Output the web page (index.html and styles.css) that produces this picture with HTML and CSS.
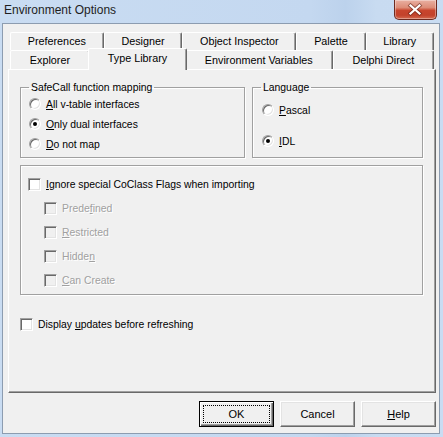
FILE: index.html
```html
<!DOCTYPE html>
<html>
<head>
<meta charset="utf-8">
<link rel="stylesheet" href="styles.css">
</head>
<body>
<div class="window">
  <div class="titlebar">
    <span class="title">Environment Options</span>
    <div class="close">
      <svg width="42" height="20" viewBox="0 0 42 20">
        <path d="M16.5 5.5 L25.5 13.5 M25.5 5.5 L16.5 13.5" stroke="#5a1a10" stroke-width="4" stroke-linecap="square" fill="none" opacity="0.55"/>
        <path d="M16.5 5.5 L25.5 13.5 M25.5 5.5 L16.5 13.5" stroke="#ffffff" stroke-width="2.2" stroke-linecap="square" fill="none"/>
      </svg>
    </div>
  </div>
  <div class="client">
    <div class="tabctl">
      <div class="tabrow row1">
        <div class="tab">Preferences</div>
        <div class="tab">Designer</div>
        <div class="tab">Object Inspector</div>
        <div class="tab">Palette</div>
        <div class="tab">Library</div>
      </div>
      <div class="tabrow row2">
        <div class="tab">Explorer</div>
        <div class="tab selected">Type Library</div>
        <div class="tab">Environment Variables</div>
        <div class="tab">Delphi Direct</div>
      </div>
      <div class="page">
        <div class="toprow">
          <fieldset class="group safecall">
            <legend>SafeCall function mapping</legend>
            <div class="opt"><span class="radio"></span><span><u>A</u>ll v-table interfaces</span></div>
            <div class="opt"><span class="radio on"></span><span><u>O</u>nly dual interfaces</span></div>
            <div class="opt"><span class="radio"></span><span><u>D</u>o not map</span></div>
          </fieldset>
          <fieldset class="group language">
            <legend>Language</legend>
            <div class="opt pascal"><span class="radio"></span><span><u>P</u>ascal</span></div>
            <div class="opt idl"><span class="radio on"></span><span><u>I</u>DL</span></div>
          </fieldset>
        </div>
        <div class="group flags">
          <div class="crow"><span class="check"></span><span><u>I</u>gnore special CoClass Flags when importing</span></div>
          <div class="crow sub disabled"><span class="check"></span><span>Prede<u>f</u>ined</span></div>
          <div class="crow sub disabled"><span class="check"></span><span><u>R</u>estricted</span></div>
          <div class="crow sub disabled"><span class="check"></span><span>Hidde<u>n</u></span></div>
          <div class="crow sub disabled"><span class="check"></span><span><u>C</u>an Create</span></div>
        </div>
        <div class="opt display"><span class="check"></span><span>Display <u>u</u>pdates before refreshing</span></div>
      </div>
    </div>
    <div class="buttons">
      <div class="btn default"><span class="focus">OK</span></div>
      <div class="btn">Cancel</div>
      <div class="btn"><span><u>H</u>elp</span></div>
    </div>
  </div>
</div>
</body>
</html>
```

FILE: styles.css
```css
* { box-sizing: border-box; }
html, body { margin: 0; padding: 0; }
body {
  width: 443px;
  height: 437px;
  overflow: hidden;
  font-family: "Liberation Sans", Arial, sans-serif;
  font-size: 10.4px;
  color: #000;
}
u { text-decoration: underline; text-underline-offset: 1px; }

.window {
  width: 443px;
  height: 437px;
  background: linear-gradient(to right, #c9dcf2 0%, #c4d8f0 70%, #bcd2ec 78%, #c8dbf1 85%, #c9dcf2 100%);
  display: flex;
  flex-direction: column;
}

.titlebar {
  height: 23px;
  display: flex;
  justify-content: space-between;
  align-items: flex-start;
}
.title {
  font-size: 12px;
  line-height: 20px;
  padding-left: 4px;
  color: #1e1e1e;
}
.close {
  width: 43px;
  height: 20px;
  margin-right: 6px;
  border: 1px solid #6d2a20;
  border-top: none;
  border-radius: 0 0 5px 5px;
  background: linear-gradient(to bottom, #e9b0a2 0%, #dd8c77 40%, #c8452d 55%, #c3422b 80%, #d46a4f 100%);
  box-shadow: inset 0 0 0 1px rgba(255,255,255,0.35);
  overflow: hidden;
}
.close svg { display: block; margin-left: -1px; }

.client {
  height: 411px;
  margin: 0 3px 0 2px;
  background: #f0f0f0;
  border: 1px solid #8c9cb0;
  padding: 8px 3px 6px 5px;
}

.tabctl { width: 428px; }
.tabrow {
  display: flex;
  padding: 0 2px;
}
.row1 { height: 18px; }
.row2 { height: 19px; }
.tab {
  flex: 1 1 auto;
  text-align: center;
  padding: 0 6px;
  background: #f0f0f0;
  border-top: 1px solid #fff;
  border-left: 1px solid #fff;
  border-right: 1px solid #696969;
  box-shadow: inset -1px 0 #a0a0a0;
  border-radius: 2px 2px 0 0;
  white-space: nowrap;
  font-size: 10.8px;
}
.row1 .tab { line-height: 17px; }
.row2 .tab { line-height: 18px; }
.row2 .tab.selected {
  margin: -2px -2px -1px -2px;
  position: relative;
  z-index: 1;
  line-height: 18px;
  height: 22px;
}

.page {
  height: 324px;
  border: 1px solid;
  border-color: #fff #696969 #696969 #fff;
  box-shadow: inset -1px -1px #a0a0a0;
  padding: 11px 12px 0 11px;
}

.toprow {
  display: flex;
  gap: 7px;
}

.group {
  border: 1px solid #a0a0a0;
  box-shadow: inset 1px 1px #fff, 1px 1px #fff;
}
fieldset.group {
  margin: 0;
  padding: 0 8px 3px 8px;
  min-inline-size: 0;
}
legend {
  padding: 0 2px;
  line-height: 13px;
  margin-left: 0;
}
.safecall { width: 225px; }
.language { width: 171px; }

.opt {
  display: flex;
  align-items: center;
  height: 20px;
}
.language .pascal { margin-top: 6px; }
.language .idl { margin-top: 11px; }

.radio {
  width: 12px;
  height: 12px;
  border-radius: 50%;
  background: #fff;
  border: 1px solid;
  border-color: #a0a0a0 #fff #fff #a0a0a0;
  box-shadow: inset 1px 1px #696969, inset -1px -1px #e3e3e3;
  margin-right: 5px;
  display: flex;
  align-items: center;
  justify-content: center;
  flex: none;
}
.radio.on::after {
  content: "";
  width: 4px;
  height: 4px;
  border-radius: 50%;
  background: #000;
}
.language .radio { margin-left: 1px; }

.check {
  width: 13px;
  height: 13px;
  background: #fff;
  border: 1px solid;
  border-color: #a0a0a0 #fff #fff #a0a0a0;
  box-shadow: inset 1px 1px #696969, inset -1px -1px #e3e3e3;
  margin-right: 5px;
  flex: none;
}

.flags {
  margin-top: 7px;
  height: 130px;
  padding: 6px 7px 2px 7px;
}
.crow {
  display: flex;
  align-items: center;
  height: 24px;
}
.crow.sub { padding-left: 16px; }
.disabled { color: #a0a0a0; text-shadow: 1px 1px #fff; }
.disabled .check { background: #f0f0f0; }

.opt.display { margin-top: 19px; }

.buttons {
  display: flex;
  justify-content: flex-end;
  gap: 6px;
  margin-top: 8px;
  width: 428px;
}
.btn {
  width: 75px;
  height: 26px;
  background: #f0f0f0;
  border: 1px solid;
  border-color: #fff #696969 #696969 #fff;
  box-shadow: inset -1px -1px #a0a0a0, inset 1px 1px #e3e3e3;
  display: flex;
  align-items: center;
  justify-content: center;
  font-size: 11px;
}
.btn.default {
  border: 1px solid #000;
  box-shadow: inset 1px 1px #fff, inset -1px -1px #696969, inset -2px -2px #a0a0a0;
  padding: 3px;
}
.btn .focus {
  width: 100%;
  height: 100%;
  border: 1px dotted #000;
  display: flex;
  align-items: center;
  justify-content: center;
}
```
